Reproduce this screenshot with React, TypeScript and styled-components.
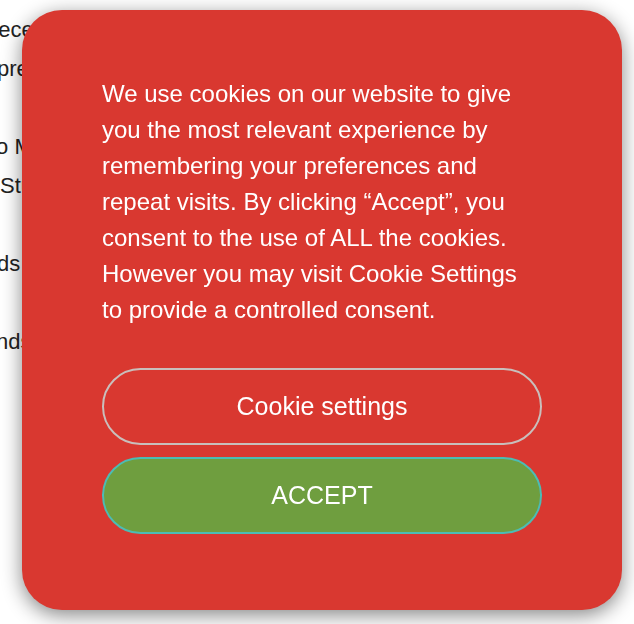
import React from 'react';
import styled, { createGlobalStyle } from 'styled-components';

const GlobalStyle = createGlobalStyle`
  html, body {
    margin: 0;
    padding: 0;
    background: #ffffff;
    font-family: "Liberation Sans", Arial, Helvetica, sans-serif;
  }
`;

const MESSAGE =
  'We use cookies on our website to give you the most relevant experience by remembering your preferences and repeat visits. By clicking \u201CAccept\u201D, you consent to the use of ALL the cookies. However you may visit Cookie Settings to provide a controlled consent.';

// fragments of the page that peek out from behind the banner (shift = how far the line starts off-screen)
type Fragment = { text: string; shift: number };
const paragraphs: Fragment[][] = [
  [{ text: 'rece', shift: 9 }, { text: 'pre', shift: 3 }],
  [{ text: 'to M', shift: 10 }, { text: 'Stu', shift: 0 }],
  [{ text: 'ds', shift: 3 }],
  [{ text: 'nds', shift: 4 }],
];

const App: React.FC = () => (
  <>
    <GlobalStyle />
    <Page>
      {paragraphs.map((lines, i) => (
        <Paragraph key={i}>
          {lines.map(line => <Line key={line.text} shift={line.shift}>{line.text}</Line>)}
        </Paragraph>
      ))}
    </Page>
    <Banner>
      <Message>{MESSAGE}</Message>
      <Actions>
        <PillButton variant="outline">Cookie settings</PillButton>
        <PillButton variant="accept">ACCEPT</PillButton>
      </Actions>
    </Banner>
  </>
);

const Page = styled.div`
  padding-top: 10px;
  color: #222222;
  font-size: 22px;
  line-height: 39px;
  overflow: hidden;
`;
const Paragraph = styled.div`
  margin-bottom: 39px;
`;
const Line = styled.div<{ shift: number }>`
  white-space: nowrap;
  margin-left: ${({ shift }) => -shift}px;
`;
const Banner = styled.div`
  position: fixed;
  top: 10px;
  left: 22px;
  width: 600px;
  box-sizing: border-box;
  padding: 66px 80px 76px;
  background: #d93830;
  border-radius: 40px;
  box-shadow: 0 5px 20px rgba(0, 0, 0, 0.48);
  display: flex;
  flex-direction: column;
  gap: 40px;
`;
const Message = styled.p`
  margin: 0;
  color: #ffffff;
  font-size: 24px;
  line-height: 36px;
`;
const Actions = styled.div`
  display: flex;
  flex-direction: column;
  gap: 12px;
`;
const PillButton = styled.button<{ variant: 'outline' | 'accept' }>`
  height: 77px;
  width: 100%;
  box-sizing: border-box;
  border-radius: 40px;
  border: 2px solid ${({ variant }) => (variant === 'accept' ? '#4cbcb4' : '#c9bfbc')};
  background: ${({ variant }) => (variant === 'accept' ? '#6f9e3f' : 'transparent')};
  color: #ffffff;
  font-family: "Liberation Sans", Arial, Helvetica, sans-serif;
  font-size: 25px;
  cursor: pointer;
`;

export default App;
